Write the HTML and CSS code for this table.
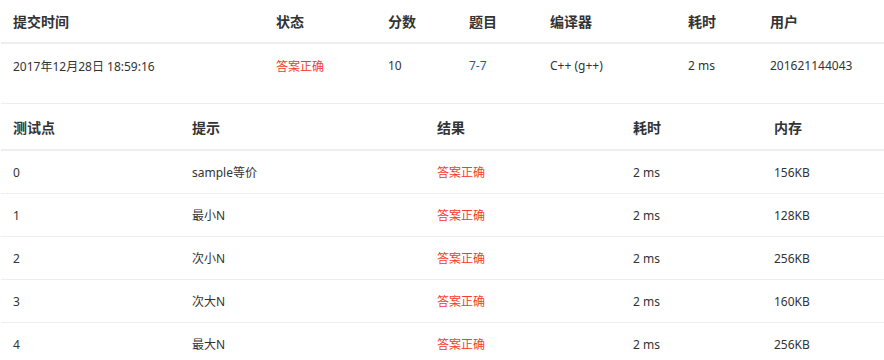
FILE: index.html
```html
<!DOCTYPE html>
<html lang="zh-CN">
<head>
<meta charset="utf-8">
<title>提交详情</title>
<link rel="stylesheet" href="styles.css">
</head>
<body>
<div class="page">
  <table class="grid summary">
    <colgroup>
      <col class="c-time"><col class="c-status"><col class="c-score"><col class="c-problem"><col class="c-compiler"><col class="c-cost"><col class="c-user">
    </colgroup>
    <thead>
      <tr><th>提交时间</th><th>状态</th><th>分数</th><th>题目</th><th>编译器</th><th>耗时</th><th>用户</th></tr>
    </thead>
    <tbody>
      <tr>
        <td>2017年12月28日 18:59:16</td>
        <td class="ok">答案正确</td>
        <td>10</td>
        <td><a class="link" href="#">7-7</a></td>
        <td>C++ (g++)</td>
        <td>2 ms</td>
        <td>201621144043</td>
      </tr>
    </tbody>
  </table>

  <table class="grid cases">
    <colgroup>
      <col class="d-point"><col class="d-hint"><col class="d-result"><col class="d-cost"><col class="d-mem">
    </colgroup>
    <thead>
      <tr><th>测试点</th><th>提示</th><th>结果</th><th>耗时</th><th>内存</th></tr>
    </thead>
    <tbody>
      <tr><td>0</td><td>sample等价</td><td class="ok">答案正确</td><td>2 ms</td><td>156KB</td></tr>
      <tr><td>1</td><td>最小N</td><td class="ok">答案正确</td><td>2 ms</td><td>128KB</td></tr>
      <tr><td>2</td><td>次小N</td><td class="ok">答案正确</td><td>2 ms</td><td>256KB</td></tr>
      <tr><td>3</td><td>次大N</td><td class="ok">答案正确</td><td>2 ms</td><td>160KB</td></tr>
      <tr><td>4</td><td>最大N</td><td class="ok">答案正确</td><td>2 ms</td><td>256KB</td></tr>
    </tbody>
  </table>
</div>
</body>
</html>
```

FILE: styles.css
```css
html, body {
  margin: 0;
  padding: 0;
  background: #fff;
}

body {
  font-family: "Noto Sans", "Noto Sans CJK SC", sans-serif;
  font-size: 12px;
  color: #333;
}

.page {
  padding-left: 1px;
  overflow: hidden;
}

.grid {
  width: 883px;
  border-collapse: collapse;
  table-layout: fixed;
}

.grid th,
.grid td {
  padding: 0 0 0 12px;
  text-align: left;
  white-space: nowrap;
  vertical-align: middle;
}

.grid th {
  font-size: 14px;
  font-weight: bold;
  color: #333;
  border-bottom: 2px solid #eeeeee;
}

.summary th { height: 42px; }
.summary td { height: 43px; }
.summary { margin-bottom: 16px; }

.cases { border-top: 1px solid #eeeeee; }
.cases th { height: 45px; }
.cases td {
  height: 42px;
  border-bottom: 1px solid #eeeeee;
}

.c-time { width: 263px; }
.c-status { width: 112px; }
.c-score { width: 81px; }
.c-problem { width: 81px; }
.c-compiler { width: 138px; }
.c-cost { width: 82px; }
.c-user { width: 126px; }

.d-point { width: 179px; }
.d-hint { width: 245px; }
.d-result { width: 196px; }
.d-cost { width: 141px; }
.d-mem { width: 122px; }

.ok { color: #f43b2c; }

.link {
  color: #1f5aa0;
  text-decoration: none;
}
```
